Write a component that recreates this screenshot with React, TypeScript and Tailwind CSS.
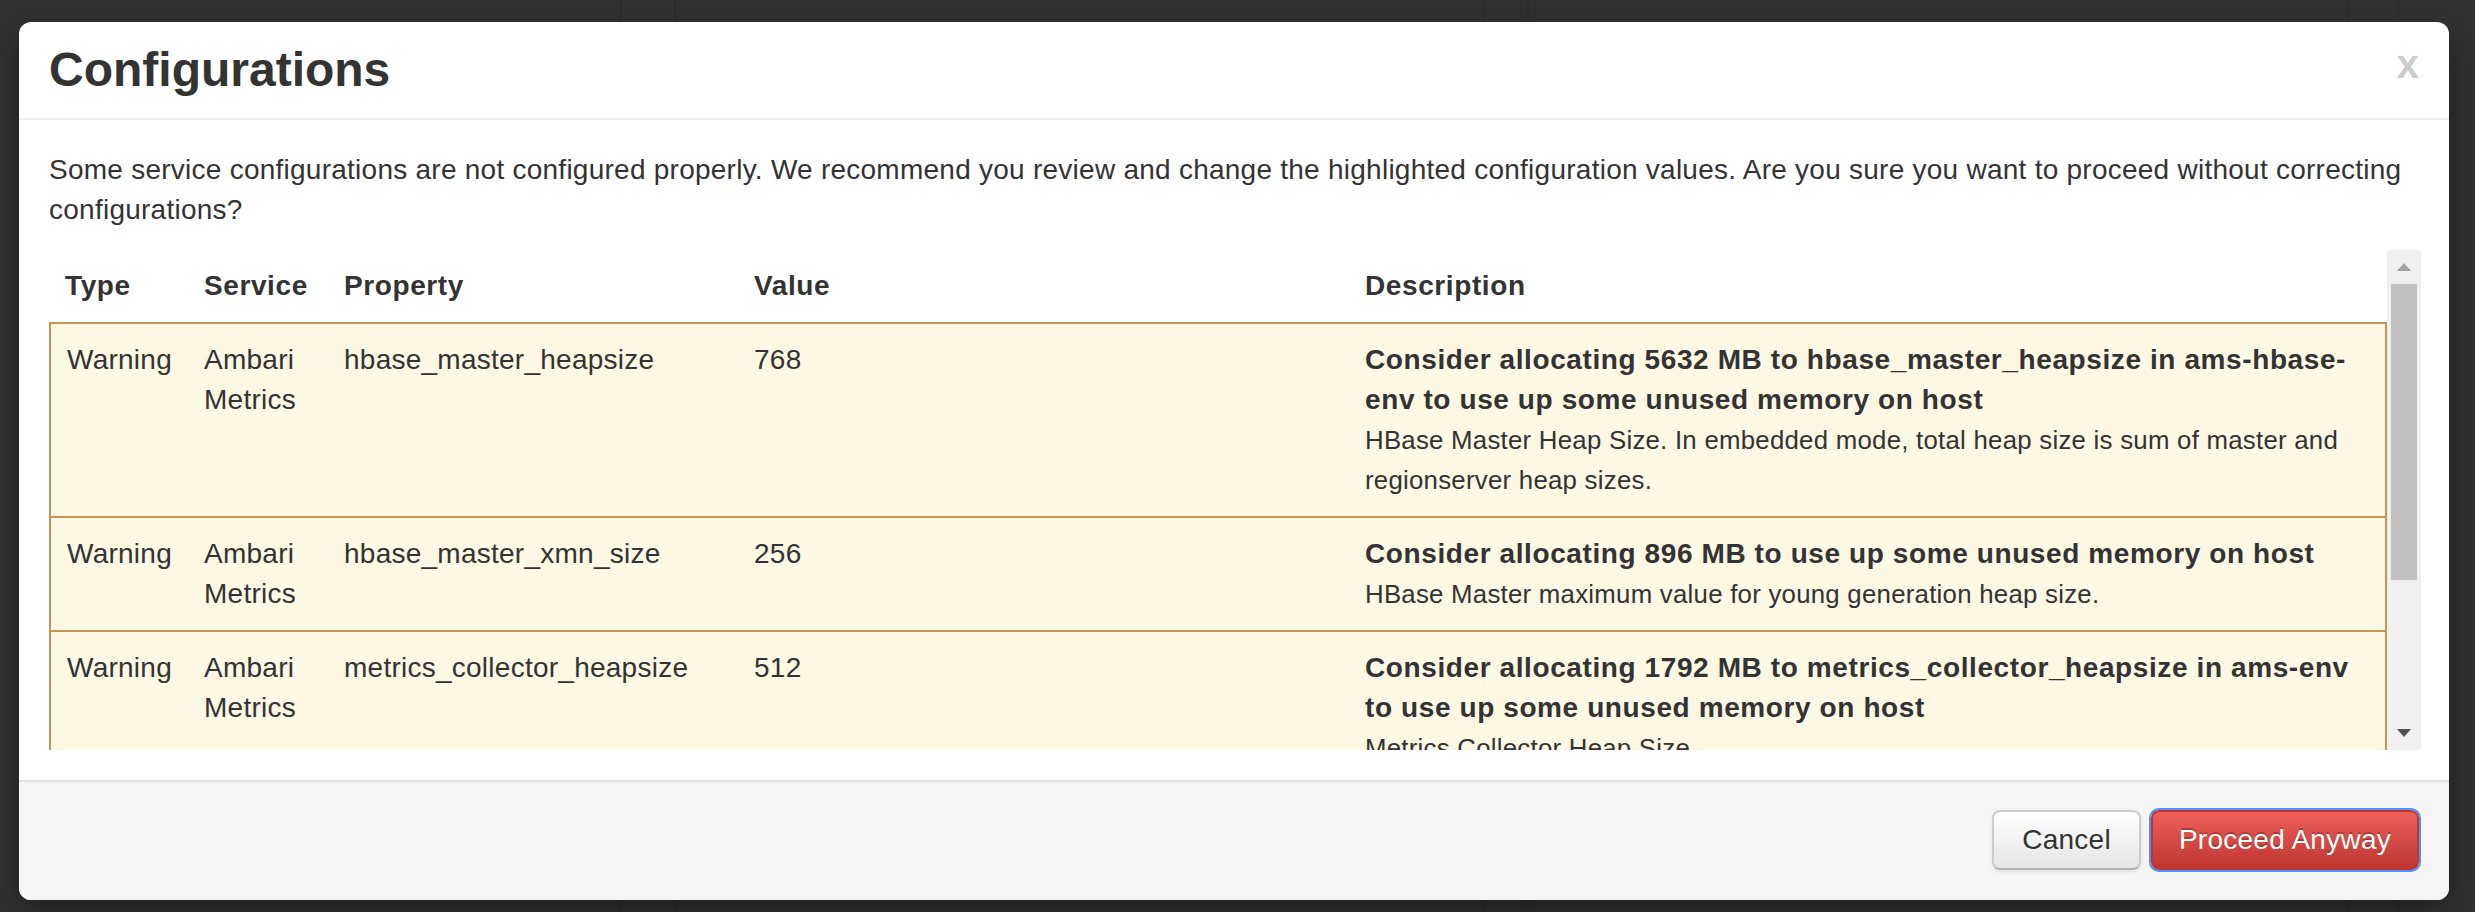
import React from 'react';

interface ConfigIssue {
  type: string;
  service: string;
  property: string;
  value: string;
  recommendation: string;
  description: string;
}

const issues: ConfigIssue[] = [
  {
    type: 'Warning',
    service: 'Ambari Metrics',
    property: 'hbase_master_heapsize',
    value: '768',
    recommendation: 'Consider allocating 5632 MB to hbase_master_heapsize in ams-hbase-env to use up some unused memory on host',
    description: 'HBase Master Heap Size. In embedded mode, total heap size is sum of master and regionserver heap sizes.',
  },
  {
    type: 'Warning',
    service: 'Ambari Metrics',
    property: 'hbase_master_xmn_size',
    value: '256',
    recommendation: 'Consider allocating 896 MB to use up some unused memory on host',
    description: 'HBase Master maximum value for young generation heap size.',
  },
  {
    type: 'Warning',
    service: 'Ambari Metrics',
    property: 'metrics_collector_heapsize',
    value: '512',
    recommendation: 'Consider allocating 1792 MB to metrics_collector_heapsize in ams-env to use up some unused memory on host',
    description: 'Metrics Collector Heap Size.',
  },
  {
    type: 'Warning',
    service: 'Ambari Metrics',
    property: 'regionserver_xmn_size',
    value: '256',
    recommendation: 'Consider allocating 512 MB to use up some unused memory on host',
    description: 'HBase RegionServer maximum value for young generation heap size.',
  },
];

// faint page columns showing through the backdrop
function Backdrop() {
  return (
    <div className="flex h-[912px] w-full bg-[#333333]">
      <div className="w-[620px]" />
      <div className="w-[54px] border-l-2 border-[#2f2f2f]" />
      <div className="w-[809px] border-l-2 border-[#2f2f2f]" />
      <div className="w-[44px] border-l-2 border-[#2f2f2f]" />
      <div className="w-[820px] border-l-2 border-[#2f2f2f]" />
      <div className="w-[50px] border-l-2 border-[#2f2f2f]" />
      <div className="flex-1 border-l-2 border-[#2f2f2f]" />
    </div>
  );
}

function FakeScrollbar() {
  return (
    <div className="flex w-[34px] flex-col bg-[#f0f0f0]">
      <div className="flex h-[34px] items-center justify-center">
        <svg width="14" height="8" viewBox="0 0 14 8">
          <polygon points="7,0 14,8 0,8" fill="#a3a3a3" />
        </svg>
      </div>
      <div className="mx-[4px] h-[296px] bg-[#c1c1c1]" />
      <div className="flex-1" />
      <div className="flex h-[34px] items-center justify-center">
        <svg width="14" height="8" viewBox="0 0 14 8">
          <polygon points="0,0 14,0 7,8" fill="#505050" />
        </svg>
      </div>
    </div>
  );
}

export default function App() {
  return (
    <div
      className="relative h-[912px] w-[2475px] overflow-hidden text-[#333333]"
      style={{ fontFamily: '"Liberation Sans", Arial, Helvetica, sans-serif' }}
    >
      <Backdrop />

      {/* modal dialog */}
      <div className="absolute left-[19px] top-[22px] w-[2430px] rounded-[12px] bg-white shadow-[0_12px_40px_rgba(0,0,0,0.45)]">
        <div className="flex items-start justify-between border-b-2 border-[#eeeeee] px-[30px] py-[18px]">
          <h3 className="text-[48px] font-bold leading-[60px]">Configurations</h3>
          <button className="mt-[4px] text-[40px] font-bold leading-[40px] text-[#cccccc]">x</button>
        </div>

        <div className="pb-[30px] pl-[30px] pr-[28px] pt-[30px]">
          <p className="mb-[20px] text-[28px] leading-[40px] tracking-[0.25px]">
            Some service configurations are not configured properly. We recommend you review and change the highlighted configuration values. Are you sure you want to proceed without correcting configurations?
          </p>

          <div className="flex h-[500px]">
            <div className="flex-1 overflow-hidden">
              <table className="w-[2338px] table-fixed border-separate border-spacing-0 text-[28px] leading-[40px] tracking-[0.25px]">
                <thead>
                  <tr>
                    <th className="w-[139px] p-[16px] text-left font-bold tracking-[0.6px]">Type</th>
                    <th className="w-[140px] p-[16px] text-left font-bold tracking-[0.6px]">Service</th>
                    <th className="w-[410px] p-[16px] text-left font-bold tracking-[0.6px]">Property</th>
                    <th className="w-[611px] p-[16px] text-left font-bold tracking-[0.6px]">Value</th>
                    <th className="p-[16px] text-left font-bold tracking-[0.6px]">Description</th>
                  </tr>
                </thead>
                <tbody>
                  {issues.map((issue, i) => (
                    <tr key={i}>
                      <td className="border-l-2 border-t-2 border-[#c09853] bg-[#fcf8e3] p-[16px] align-top">{issue.type}</td>
                      <td className="border-t-2 border-[#c09853] bg-[#fcf8e3] p-[16px] align-top">{issue.service}</td>
                      <td className="border-t-2 border-[#c09853] bg-[#fcf8e3] p-[16px] align-top">{issue.property}</td>
                      <td className="border-t-2 border-[#c09853] bg-[#fcf8e3] p-[16px] align-top">{issue.value}</td>
                      <td className="border-r-2 border-t-2 border-[#c09853] bg-[#fcf8e3] p-[16px] align-top">
                        <div className="font-bold tracking-[0.6px]">{issue.recommendation}</div>
                        <div className="text-[25.8px] leading-[40px]">{issue.description}</div>
                      </td>
                    </tr>
                  ))}
                </tbody>
              </table>
            </div>
            <FakeScrollbar />
          </div>
        </div>

        <div className="flex justify-end gap-[10px] rounded-b-[12px] border-t-2 border-[#dddddd] bg-[#f5f5f5] px-[30px] pb-[30px] pt-[28px]">
          <button className="rounded-[8px] border-2 border-[#cccccc] border-b-[#b3b3b3] bg-gradient-to-b from-white to-[#e6e6e6] px-[28px] py-[8px] text-[28px] leading-[40px] tracking-[0.25px] text-[#333333] shadow-[0_2px_4px_rgba(0,0,0,0.08)]">
            Cancel
          </button>
          <button className="rounded-[8px] border-2 border-[#bd362f] bg-gradient-to-b from-[#ee5f5b] to-[#bd362f] px-[26px] py-[8px] text-[28px] leading-[40px] tracking-[0.25px] text-white outline-2 outline-[#4d90fe] [text-shadow:0_-2px_0_rgba(0,0,0,0.25)]">
            Proceed Anyway
          </button>
        </div>
      </div>
    </div>
  );
}
